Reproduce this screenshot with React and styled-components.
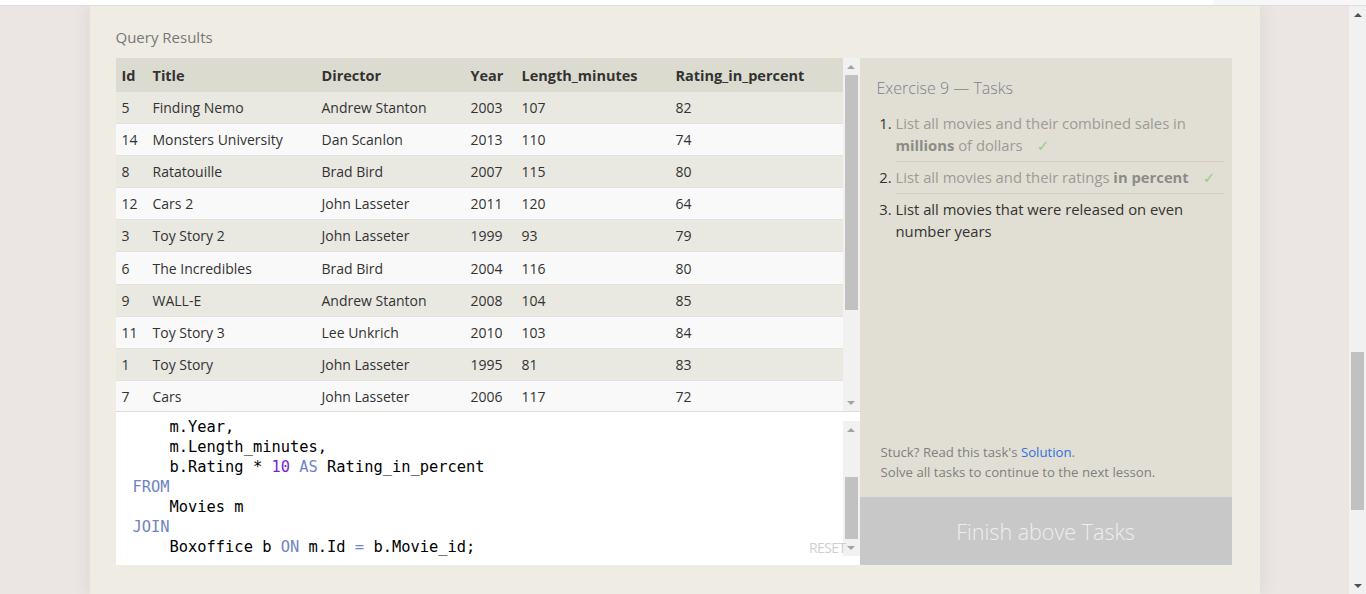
import React from 'react';
import styled, { createGlobalStyle } from 'styled-components';

const GlobalStyle = createGlobalStyle`
  html, body {
    margin: 0;
    padding: 0;
    height: 594px;
    overflow: hidden;
    background: #ebe6e3;
    font-family: "Open Sans", "Noto Sans", sans-serif;
  }
  #root {
    height: 594px;
  }
`;

const Page = styled.div`
  display: flex;
  flex-direction: column;
  height: 594px;
`;

const TopStrip = styled.div`
  display: flex;
  height: 5px;
  background: #f7f7f7;
  border-bottom: 1px solid #dedede;
  flex-shrink: 0;

  .bar {
    width: 1213px;
    background: #fff;
    border-bottom-right-radius: 3px;
  }
`;

const Body = styled.div`
  display: flex;
  flex: 1;
  min-height: 0;
`;

const Main = styled.div`
  flex: 1;
  display: flex;
  justify-content: center;
  overflow: hidden;
`;

const Card = styled.div`
  width: 1170px;
  flex-shrink: 0;
  background: #efece4;
  box-shadow: 0 0 18px rgba(80, 60, 50, 0.09);
  padding: 21px 28px 30px 26px;
  box-sizing: border-box;
`;

const SectionTitle = styled.div`
  font-size: 15px;
  line-height: 20px;
  color: #777;
  margin-bottom: 11px;
`;

const Workspace = styled.div`
  display: grid;
  grid-template-columns: 744px 372px;
  height: 507px;
`;

const LeftColumn = styled.div`
  display: flex;
  flex-direction: column;
`;

const Results = styled.div`
  display: flex;
  height: 354px;
  flex-shrink: 0;
  border-bottom: 1px solid #dedcd4;
  box-sizing: border-box;
`;

const Table = styled.div`
  flex: 1;
  overflow: hidden;
`;

const Row = styled.div`
  display: grid;
  grid-template-columns: 31px 169px 149px 51px 154px 1fr;
  height: ${({ $head }) => ($head ? '34px' : '32.1px')};
  align-items: center;
  box-sizing: border-box;
  background: ${({ $head, $odd }) => ($head ? '#dcdbcf' : $odd ? '#e9e8e1' : '#f9f9f9')};
  border-bottom: ${({ $head }) => ($head ? 'none' : '1px solid #e2e1da')};
  font-size: ${({ $head }) => ($head ? '14.5px' : '14px')};
  font-weight: ${({ $head }) => ($head ? 700 : 400)};
  color: #333;
`;

const Cell = styled.div`
  padding-left: 6px;
  white-space: nowrap;
  overflow: hidden;
`;

const ScrollBar = styled.div`
  width: 17px;
  flex-shrink: 0;
  display: flex;
  flex-direction: column;
  background: #f1f1f1;
  margin: ${({ $margin }) => $margin || '0'};
`;

const Arrow = styled.div`
  height: 17px;
  flex-shrink: 0;
  display: flex;
  align-items: center;
  justify-content: center;

  &::after {
    content: '';
    width: 0;
    height: 0;
    border-left: 4px solid transparent;
    border-right: 4px solid transparent;
    ${({ $down, $dark }) =>
      $down
        ? `border-top: 4px solid ${$dark ? '#505050' : '#a3a3a3'};`
        : `border-bottom: 4px solid ${$dark ? '#505050' : '#a3a3a3'};`}
  }
`;

const Track = styled.div`
  flex: 1;
  display: flex;
  flex-direction: column;
`;

const Thumb = styled.div`
  margin: 0 2px;
  background: #c1c1c1;
`;

const Editor = styled.div`
  position: relative;
  flex: 1;
  display: flex;
  background: #fff;
`;

const Code = styled.div`
  flex: 1;
  padding: 5px 0 0 17px;
  font-family: "DejaVu Sans Mono", "Liberation Mono", monospace;
  font-size: 15.4px;
  line-height: 20px;
  color: #000;
  overflow: hidden;
`;

const Line = styled.div`
  white-space: pre;
  padding-left: ${({ $indent }) => ($indent ? '37px' : '0')};
`;

const Kw = styled.span`
  color: ${({ $num }) => ($num ? '#7a1fd4' : '#7084c4')};
`;

const Reset = styled.div`
  position: absolute;
  right: 14px;
  bottom: 8px;
  font-size: 14px;
  color: #cfcfcf;
  letter-spacing: -0.6px;
`;

const Panel = styled.div`
  background: #e1dfd3;
  display: flex;
  flex-direction: column;
`;

const Tasks = styled.div`
  flex: 1;
  padding: 19px 7px 0 17px;
`;

const TasksTitle = styled.div`
  font-size: 16px;
  line-height: 22px;
  color: #7b818e;
  font-weight: 300;
  margin-bottom: 9px;
`;

const TaskList = styled.ol`
  margin: 0;
  padding-left: 19px;
`;

const Task = styled.li`
  font-size: 14.8px;
  line-height: 22px;
  padding: 4px 0 5px;
  color: ${({ $done }) => ($done ? '#9c9b97' : '#333')};
  border-bottom: ${({ $last }) => ($last ? 'none' : '1px solid #d3d1c6')};

  &::marker {
    color: #333;
  }

  b {
    color: #8c8b88;
  }
`;

const Check = styled.span`
  color: #8fd08f;
  margin-left: 14px;
  font-family: "DejaVu Sans", sans-serif;
  font-size: 15px;
  line-height: 0;
`;

const Help = styled.div`
  padding: 0 10px 15px 21px;
  font-size: 13.2px;
  line-height: 20px;
  color: #808080;

  a {
    color: #2f6fdf;
    text-decoration: none;
  }
`;

const FinishButton = styled.div`
  height: 68px;
  flex-shrink: 0;
  background: #c8c8c8;
  display: flex;
  align-items: center;
  justify-content: center;
  font-size: 21.5px;
  font-weight: 300;
  color: #eeeeee;
`;

const columns = ['Id', 'Title', 'Director', 'Year', 'Length_minutes', 'Rating_in_percent'];

const movies = [
  [5, 'Finding Nemo', 'Andrew Stanton', 2003, 107, 82],
  [14, 'Monsters University', 'Dan Scanlon', 2013, 110, 74],
  [8, 'Ratatouille', 'Brad Bird', 2007, 115, 80],
  [12, 'Cars 2', 'John Lasseter', 2011, 120, 64],
  [3, 'Toy Story 2', 'John Lasseter', 1999, 93, 79],
  [6, 'The Incredibles', 'Brad Bird', 2004, 116, 80],
  [9, 'WALL-E', 'Andrew Stanton', 2008, 104, 85],
  [11, 'Toy Story 3', 'Lee Unkrich', 2010, 103, 84],
  [1, 'Toy Story', 'John Lasseter', 1995, 81, 83],
  [7, 'Cars', 'John Lasseter', 2006, 117, 72],
];

const FakeScroll = ({ offset, size, dark, margin }) => (
  <ScrollBar $margin={margin}>
    <Arrow $dark={dark} />
    <Track>
      <Thumb style={{ marginTop: offset, height: size }} />
    </Track>
    <Arrow $down $dark={dark} />
  </ScrollBar>
);

export default function App() {
  return (
    <>
      <GlobalStyle />
      <Page>
        <TopStrip>
          <div className="bar" />
        </TopStrip>
        <Body>
          <Main>
            <Card>
              <SectionTitle>Query Results</SectionTitle>
              <Workspace>
                <LeftColumn>
                  <Results>
                    <Table>
                      <Row $head>
                        {columns.map((c) => (
                          <Cell key={c}>{c}</Cell>
                        ))}
                      </Row>
                      {movies.map((m, i) => (
                        <Row key={m[0]} $odd={i % 2 === 0}>
                          {m.map((v, j) => (
                            <Cell key={j}>{v}</Cell>
                          ))}
                        </Row>
                      ))}
                    </Table>
                    <FakeScroll offset={0} size={235} />
                  </Results>
                  <Editor>
                    <Code>
                      <Line $indent>m.Year,</Line>
                      <Line $indent>m.Length_minutes,</Line>
                      <Line $indent>
                        b.Rating * <Kw $num>10</Kw> <Kw>AS</Kw> Rating_in_percent
                      </Line>
                      <Line><Kw>FROM</Kw></Line>
                      <Line $indent>Movies m</Line>
                      <Line><Kw>JOIN</Kw></Line>
                      <Line $indent>
                        Boxoffice b <Kw>ON</Kw> m.Id <Kw>=</Kw> b.Movie_id;
                      </Line>
                    </Code>
                    <FakeScroll offset={39} size={62} margin="9px 0" />
                    <Reset>RESET</Reset>
                  </Editor>
                </LeftColumn>
                <Panel>
                  <Tasks>
                    <TasksTitle>Exercise 9 — Tasks</TasksTitle>
                    <TaskList>
                      <Task $done>
                        List all movies and their combined sales in <b>millions</b> of dollars
                        <Check>✓</Check>
                      </Task>
                      <Task $done>
                        List all movies and their ratings <b>in percent</b>
                        <Check>✓</Check>
                      </Task>
                      <Task $last>List all movies that were released on even number years</Task>
                    </TaskList>
                  </Tasks>
                  <Help>
                    Stuck? Read this task's <a href="#">Solution</a>.
                    <br />
                    Solve all tasks to continue to the next lesson.
                  </Help>
                  <FinishButton>Finish above Tasks</FinishButton>
                </Panel>
              </Workspace>
            </Card>
          </Main>
          <FakeScroll offset={329} size={158} dark />
        </Body>
      </Page>
    </>
  );
}
